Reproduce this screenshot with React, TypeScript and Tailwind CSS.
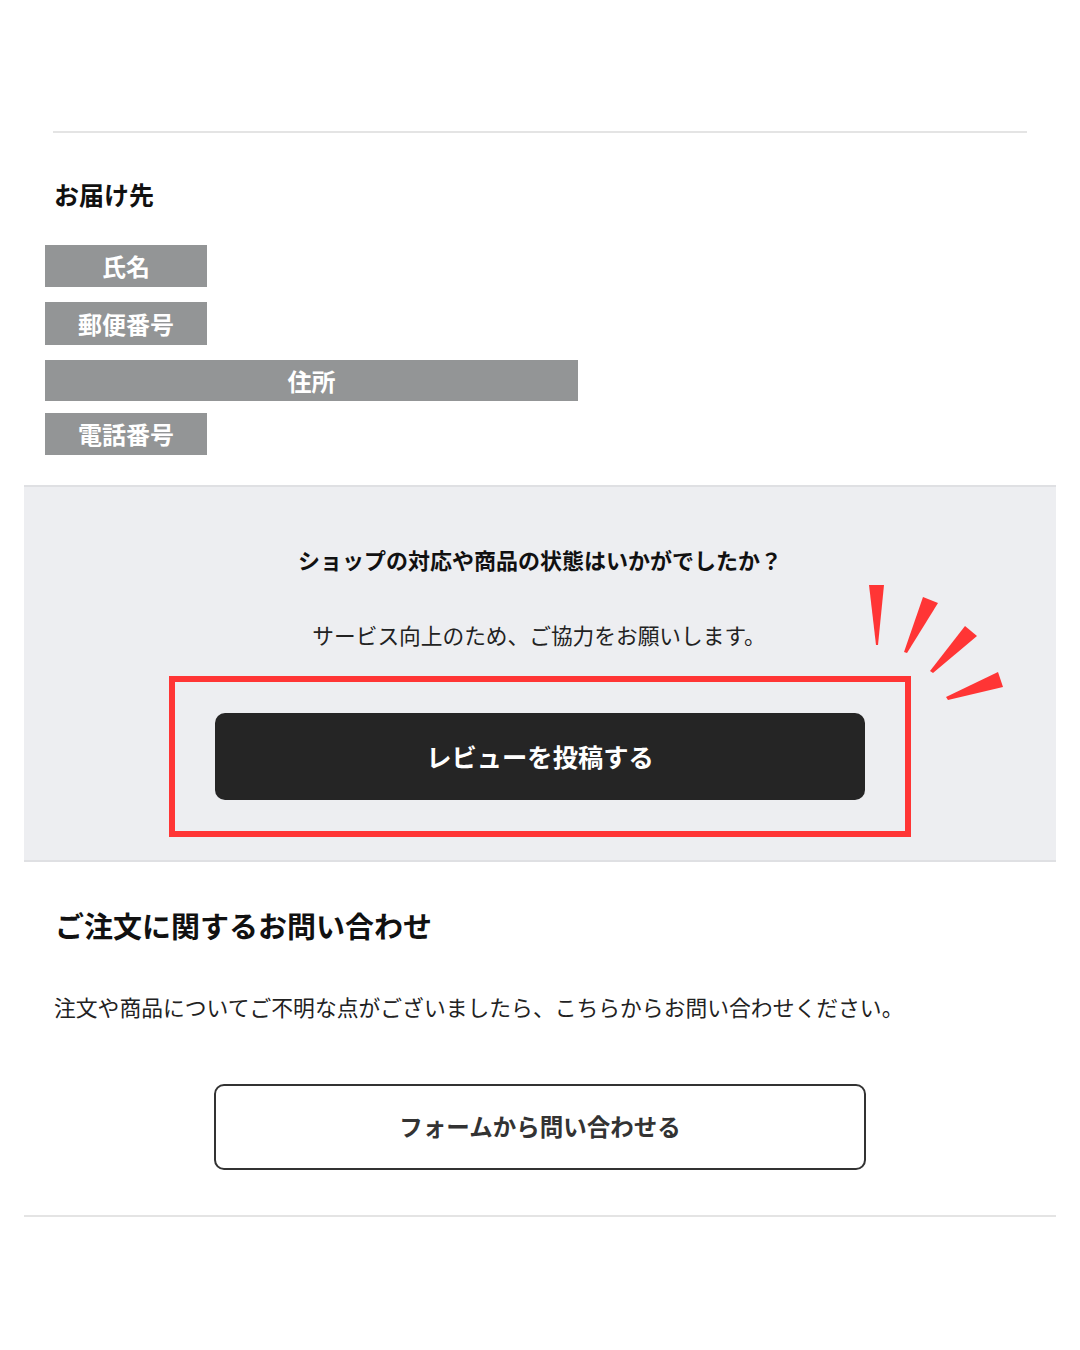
import React from "react";

const font = { fontFamily: '"Noto Sans CJK JP", "Noto Sans", sans-serif' };

export default function App() {
  return (
    <div className="w-[1080px] h-[1350px] bg-white text-[#1a1a1a] overflow-hidden" style={font}>
      <div className="pt-[131px]">
        <div className="mx-[53px] h-[2px] bg-[#e4e4e4]" />
      </div>
      <h2 className="mt-[43px] ml-[54px] text-[25px] leading-[36px] font-bold text-[#111]">お届け先</h2>
      <div className="mt-[33px] ml-[45px] flex flex-col items-start">
        <div className="w-[162px] h-[42px] bg-[#939596] text-white font-bold text-[24px] flex items-center justify-center">氏名</div>
        <div className="mt-[15px] w-[162px] h-[43px] bg-[#939596] text-white font-bold text-[24px] flex items-center justify-center">郵便番号</div>
        <div className="mt-[15px] w-[533px] h-[41px] bg-[#939596] text-white font-bold text-[24px] flex items-center justify-center">住所</div>
        <div className="mt-[12px] w-[162px] h-[42px] bg-[#939596] text-white font-bold text-[24px] flex items-center justify-center">電話番号</div>
      </div>
      <section className="relative mt-[30px] mx-[24px] h-[377px] bg-[#edeef1] border-t-2 border-b-2 border-[#dfe0e3] flex flex-col items-center">
        <p className="mt-[57px] text-[22px] leading-[30px] font-bold text-[#111]">ショップの対応や商品の状態はいかがでしたか？</p>
        <p className="mt-[46px] -ml-[2px] text-[21.7px] leading-[30px] text-[#222]">サービス向上のため、ご協力をお願いします。</p>
        <div className="mt-[26px] w-[742px] h-[161px] border-[6px] border-[#ff3535] flex items-center justify-center">
          <button className="w-[650px] h-[87px] rounded-[10px] bg-[#252525] text-white text-[25.3px] font-bold flex items-center justify-center">レビューを投稿する</button>
        </div>
        <svg className="absolute -left-[2px] -top-[1px]" width="1032" height="374" viewBox="24 486 1032 374">
          <polygon points="871,585 886,585 880,645 878,645" fill="#ff3535" />
          <polygon points="925,597 940,603 909,653 906,652" fill="#ff3535" />
          <polygon points="967,626 979,636 935,673 932,671" fill="#ff3535" />
          <polygon points="1000,672 1005,687 950,700 948,697" fill="#ff3535" />
        </svg>
      </section>
      <h2 className="mt-[43px] ml-[55px] text-[29px] leading-[40px] font-bold text-[#111]">ご注文に関するお問い合わせ</h2>
      <p className="mt-[47px] ml-[54px] text-[21.8px] leading-[30px] text-[#222]">注文や商品についてご不明な点がございましたら、こちらからお問い合わせください。</p>
      <div className="mt-[62px] flex justify-center">
        <button className="w-[652px] h-[86px] rounded-[10px] border-2 border-[#333] bg-white text-[23.5px] font-bold text-[#333] flex items-center justify-center">フォームから問い合わせる</button>
      </div>
      <div className="mt-[45px] mx-[24px] h-[2px] bg-[#e4e4e4]" />
    </div>
  );
}
